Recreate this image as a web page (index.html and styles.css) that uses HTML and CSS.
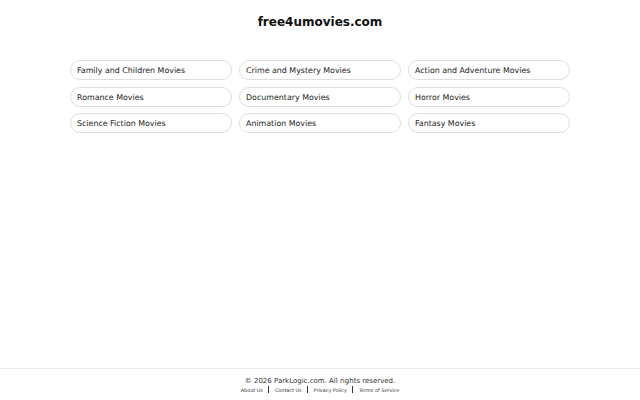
FILE: index.html
```html
<!DOCTYPE html>
<html>
<head>
<meta charset="utf-8">
<link rel="stylesheet" href="styles.css">
</head>
<body>
<div class="page">
  <main class="main">
    <h1 class="title">free4umovies.com</h1>
    <div class="grid">
      <a class="pill" href="#">Family and Children Movies</a>
      <a class="pill" href="#">Crime and Mystery Movies</a>
      <a class="pill" href="#">Action and Adventure Movies</a>
      <a class="pill" href="#">Romance Movies</a>
      <a class="pill" href="#">Documentary Movies</a>
      <a class="pill" href="#">Horror Movies</a>
      <a class="pill" href="#">Science Fiction Movies</a>
      <a class="pill" href="#">Animation Movies</a>
      <a class="pill" href="#">Fantasy Movies</a>
    </div>
  </main>
  <footer class="footer">
    <div class="copy">© 2026 ParkLogic.com. All rights reserved.</div>
    <div class="links">
      <a href="#">About Us</a><span class="sep"></span>
      <a href="#">Contact Us</a><span class="sep"></span>
      <a href="#">Privacy Policy</a><span class="sep"></span>
      <a href="#">Terms of Service</a>
    </div>
  </footer>
</div>
</body>
</html>
```
FILE: styles.css
```css
html, body {
  margin: 0;
  padding: 0;
  background: #fff;
}
body {
  font-family: "DejaVu Sans", sans-serif;
  color: #222;
}
.page {
  height: 400px;
  display: flex;
  flex-direction: column;
}
.main {
  flex: 1;
  display: flex;
  flex-direction: column;
  align-items: center;
}
.title {
  margin: 13px 0 0 0;
  font-size: 12px;
  font-weight: bold;
  color: #111;
  line-height: 18px;
}
.grid {
  margin-top: 29px;
  width: 500px;
  display: grid;
  grid-template-columns: repeat(3, 1fr);
  column-gap: 7px;
  row-gap: 6.5px;
}
.pill {
  display: block;
  height: 20px;
  box-sizing: border-box;
  border: 1px solid #dedede;
  border-radius: 10px;
  padding: 0 6px;
  font-size: 7.9px;
  line-height: 19px;
  color: #222;
  text-decoration: none;
}
.footer {
  border-top: 1px solid #eee;
  height: 32px;
  box-sizing: border-box;
  text-align: center;
  padding-top: 7.5px;
}
.copy {
  font-size: 7px;
  line-height: 9px;
  color: #333;
}
.links {
  font-size: 4.9px;
  line-height: 8px;
  display: flex;
  justify-content: center;
  align-items: center;
  gap: 5.5px;
}
.links a {
  color: #333;
  text-decoration: none;
}
.sep {
  width: 1px;
  height: 7px;
  background: #333;
}
```
